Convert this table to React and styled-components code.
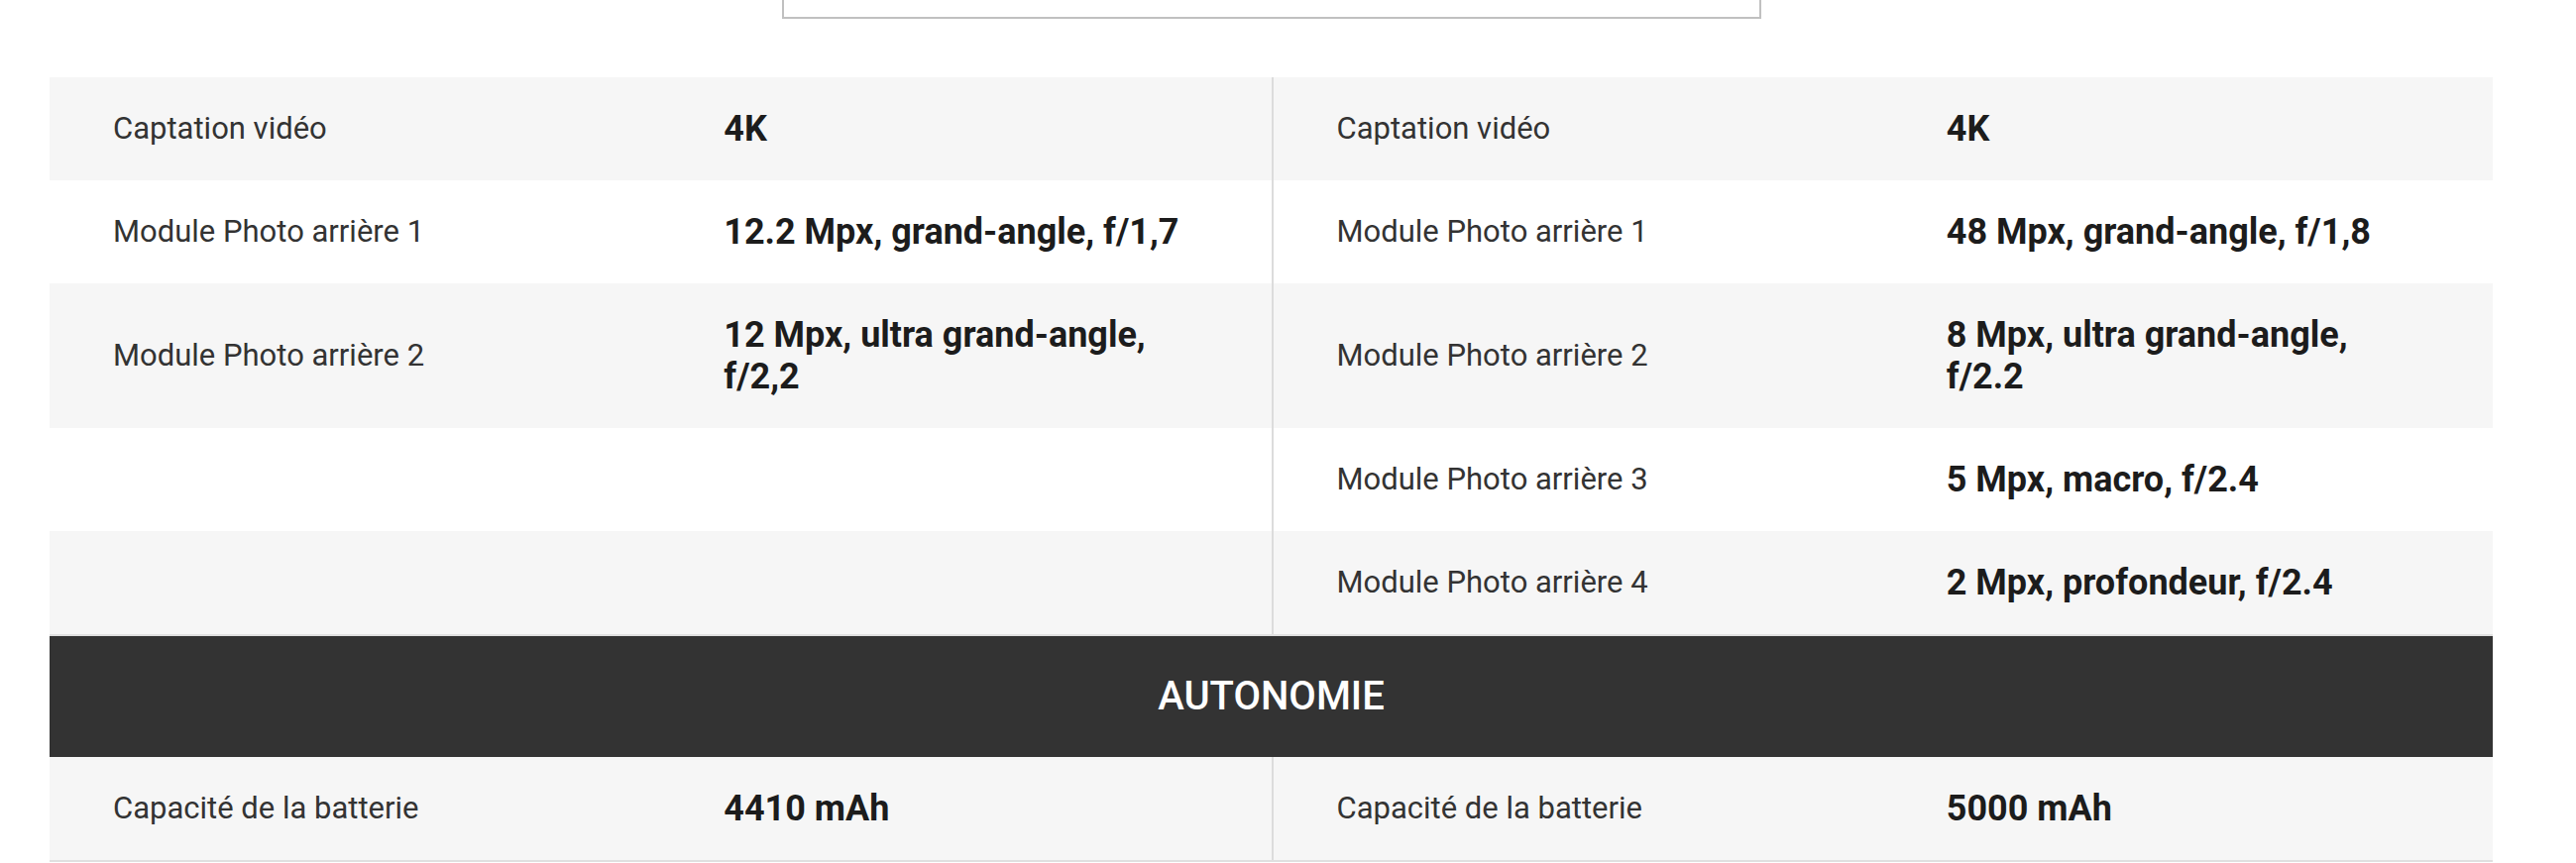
import React from 'react'
import styled, { createGlobalStyle } from 'styled-components'

const GlobalStyle = createGlobalStyle`
  body {
    margin: 0;
    background: #fff;
    font-family: Roboto, "Liberation Sans", sans-serif;
  }
`

const sections = [
  {
    title: null,
    rows: [
      [
        { label: 'Captation vidéo', value: '4K' },
        { label: 'Captation vidéo', value: '4K' },
      ],
      [
        { label: 'Module Photo arrière 1', value: '12.2 Mpx, grand-angle, f/1,7' },
        { label: 'Module Photo arrière 1', value: '48 Mpx, grand-angle, f/1,8' },
      ],
      [
        { label: 'Module Photo arrière 2', value: '12 Mpx, ultra grand-angle, f/2,2' },
        { label: 'Module Photo arrière 2', value: '8 Mpx, ultra grand-angle, f/2.2' },
      ],
      [null, { label: 'Module Photo arrière 3', value: '5 Mpx, macro, f/2.4' }],
      [null, { label: 'Module Photo arrière 4', value: '2 Mpx, profondeur, f/2.4' }],
    ],
  },
  {
    title: 'AUTONOMIE',
    rows: [
      [
        { label: 'Capacité de la batterie', value: '4410 mAh' },
        { label: 'Capacité de la batterie', value: '5000 mAh' },
      ],
    ],
  },
]

const App = () => {
  return (
    <>
      <GlobalStyle />
      <Page>
        <PickerBox />
        <Sheet>
          {sections.map((section, s) => (
            <Section key={s}>
              {section.title && <SectionTitle>{section.title}</SectionTitle>}
              {section.rows.map((row, r) => (
                <SpecRow key={r} $shaded={r % 2 === 0}>
                  {row.map((spec, side) => (
                    <Half key={side} $right={side === 1}>
                      <Label>{spec ? spec.label : ''}</Label>
                      <Value>{spec ? spec.value : ''}</Value>
                    </Half>
                  ))}
                </SpecRow>
              ))}
            </Section>
          ))}
        </Sheet>
      </Page>
    </>
  )
}

export default App

const Page = styled.div`
  padding: 0 84px 0 50px;
`

const PickerBox = styled.div`
  box-sizing: border-box;
  width: 988px;
  height: 19px;
  margin: 0 auto 59px;
  border: 2px solid #c0c0c0;
  border-top: none;
  background: #fff;
`

const Sheet = styled.div`
  display: flex;
  flex-direction: column;
`

const Section = styled.section`
  border-bottom: 2px solid #e0e0e0;
`

const SectionTitle = styled.h2`
  margin: 0;
  padding: 39px 0;
  background: #333333;
  color: #fff;
  text-align: center;
  font-size: 40px;
  line-height: 44px;
  font-weight: 500;
`

const SpecRow = styled.div`
  display: grid;
  grid-template-columns: 1fr 1fr;
  background: ${(p) => (p.$shaded ? '#f6f6f6' : '#fff')};
`

const Half = styled.div`
  display: grid;
  grid-template-columns: 1fr 1fr;
  align-items: center;
  border-left: ${(p) => (p.$right ? '2px solid #dcdcdc' : 'none')};
`

const Label = styled.div`
  padding: 31px 40px 31px 64px;
  font-size: 31px;
  line-height: 42px;
  color: #333;
`

const Value = styled.div`
  padding: 31px 76px 31px 64px;
  font-size: 36px;
  line-height: 42px;
  font-weight: 700;
  color: #1c1c1c;
`
